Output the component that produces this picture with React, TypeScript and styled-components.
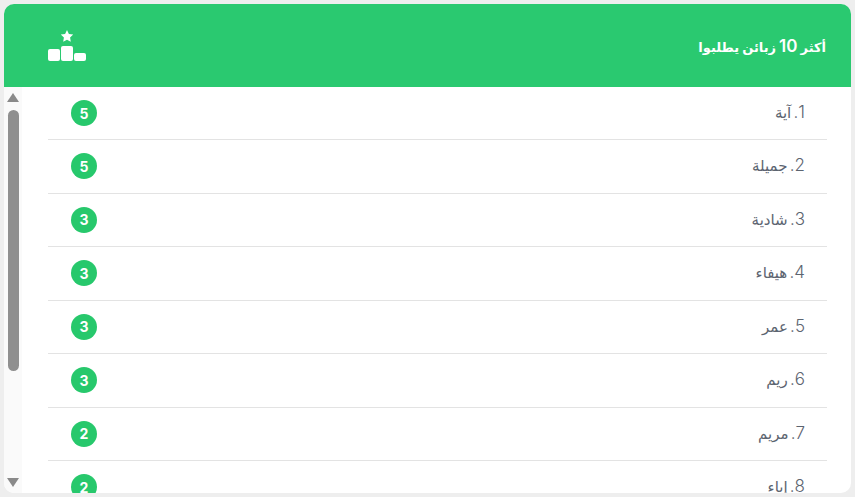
import React from "react";
import styled, { createGlobalStyle } from "styled-components";

const GlobalStyle = createGlobalStyle`
  html, body {
    margin: 0;
    height: 100%;
    background: #eeeeee;
    overflow: hidden;
  }
`;

const Page = styled.div`
  height: 497px;
  box-sizing: border-box;
  padding: 4px;
`;

const Card = styled.section`
  height: 489px;
  display: flex;
  flex-direction: column;
  background: #ffffff;
  border-radius: 10px;
  overflow: hidden;
  font-family: Inter, "DejaVu Sans", sans-serif;
`;

const Header = styled.header`
  flex: 0 0 83px;
  display: flex;
  align-items: center;
  justify-content: space-between;
  padding: 0 25px 0 43px;
  background: #2ac970;
  color: #ffffff;
`;

const Title = styled.h1`
  margin: 0;
  direction: rtl;
  font-size: 13px;
  font-weight: 700;
`;

const TitleNumber = styled.span`
  font-size: 17px;
  font-weight: 600;
`;

const Body = styled.div`
  flex: 1;
  min-height: 0;
  display: flex;
`;

const ScrollBar = styled.div`
  flex: 0 0 18px;
  display: flex;
  flex-direction: column;
  align-items: center;
  background: #fafafa;
  padding: 6px 0 6px;
  box-sizing: border-box;
`;

const Arrow = styled.span<{ $down?: boolean }>`
  flex: none;
  width: 0;
  height: 0;
  border-left: 6.5px solid transparent;
  border-right: 6.5px solid transparent;
  ${(p) => (p.$down ? "border-top: 9px solid #8a8a8a;" : "border-bottom: 9px solid #8a8a8a;")}
`;

const Thumb = styled.div`
  width: 11px;
  height: 261px;
  margin-top: 8px;
  border-radius: 6px;
  background: #8f8f8f;
`;

const TrackGap = styled.div`
  flex: 1;
`;

const List = styled.ol`
  flex: 1;
  min-width: 0;
  margin: 0;
  padding: 0 24px 0 26px;
  list-style: none;
  overflow: hidden;
`;

const Row = styled.li`
  height: 53.5px;
  box-sizing: border-box;
  display: flex;
  align-items: center;
  justify-content: space-between;
  padding: 0 22px 0 23px;
  border-bottom: 1px solid #e3e3e3;

  &:first-child {
    height: 53px;
  }
`;

const Badge = styled.span`
  width: 26px;
  height: 26px;
  flex: none;
  display: flex;
  align-items: center;
  justify-content: center;
  border-radius: 50%;
  background: #27c86c;
  color: #ffffff;
  font-size: 14px;
  font-weight: 700;
`;

const Name = styled.span`
  direction: rtl;
  padding-bottom: 2px;
  font-size: 15px;
  color: #5c6470;
`;

const Rank = styled.span`
  margin-left: -2px;
  font-size: 17px;
  font-weight: 300;
`;

const customers = [
  { name: "آية", count: 5 },
  { name: "جميلة", count: 5 },
  { name: "شادية", count: 3 },
  { name: "هيفاء", count: 3 },
  { name: "عمر", count: 3 },
  { name: "ريم", count: 3 },
  { name: "مريم", count: 2 },
  { name: "إباء", count: 2 },
];

// podium with a star on top
function PodiumIcon() {
  return (
    <svg width="40" height="33" viewBox="0 0 40 33" fill="#ffffff">
      <path d="M20 1l1.9 3.9 4.3.6-3.1 3 .7 4.3-3.8-2-3.8 2 .7-4.3-3.1-3 4.3-.6z" />
      <rect x="1" y="20" width="12" height="12" rx="2" />
      <rect x="14" y="17" width="12" height="15" rx="2" />
      <rect x="27" y="24" width="12" height="8" rx="2" />
    </svg>
  );
}

export default function App() {
  return (
    <Page>
      <GlobalStyle />
      <Card>
        <Header>
          <PodiumIcon />
          <Title>
            أكثر <TitleNumber>10</TitleNumber> زبائن يطلبوا
          </Title>
        </Header>
        <Body>
          <ScrollBar>
            <Arrow />
            <Thumb />
            <TrackGap />
            <Arrow $down />
          </ScrollBar>
          <List>
            {customers.map((c, i) => (
              <Row key={c.name}>
                <Badge>{c.count}</Badge>
                <Name>
                  <Rank>{i + 1}.</Rank> {c.name}
                </Name>
              </Row>
            ))}
          </List>
        </Body>
      </Card>
    </Page>
  );
}
